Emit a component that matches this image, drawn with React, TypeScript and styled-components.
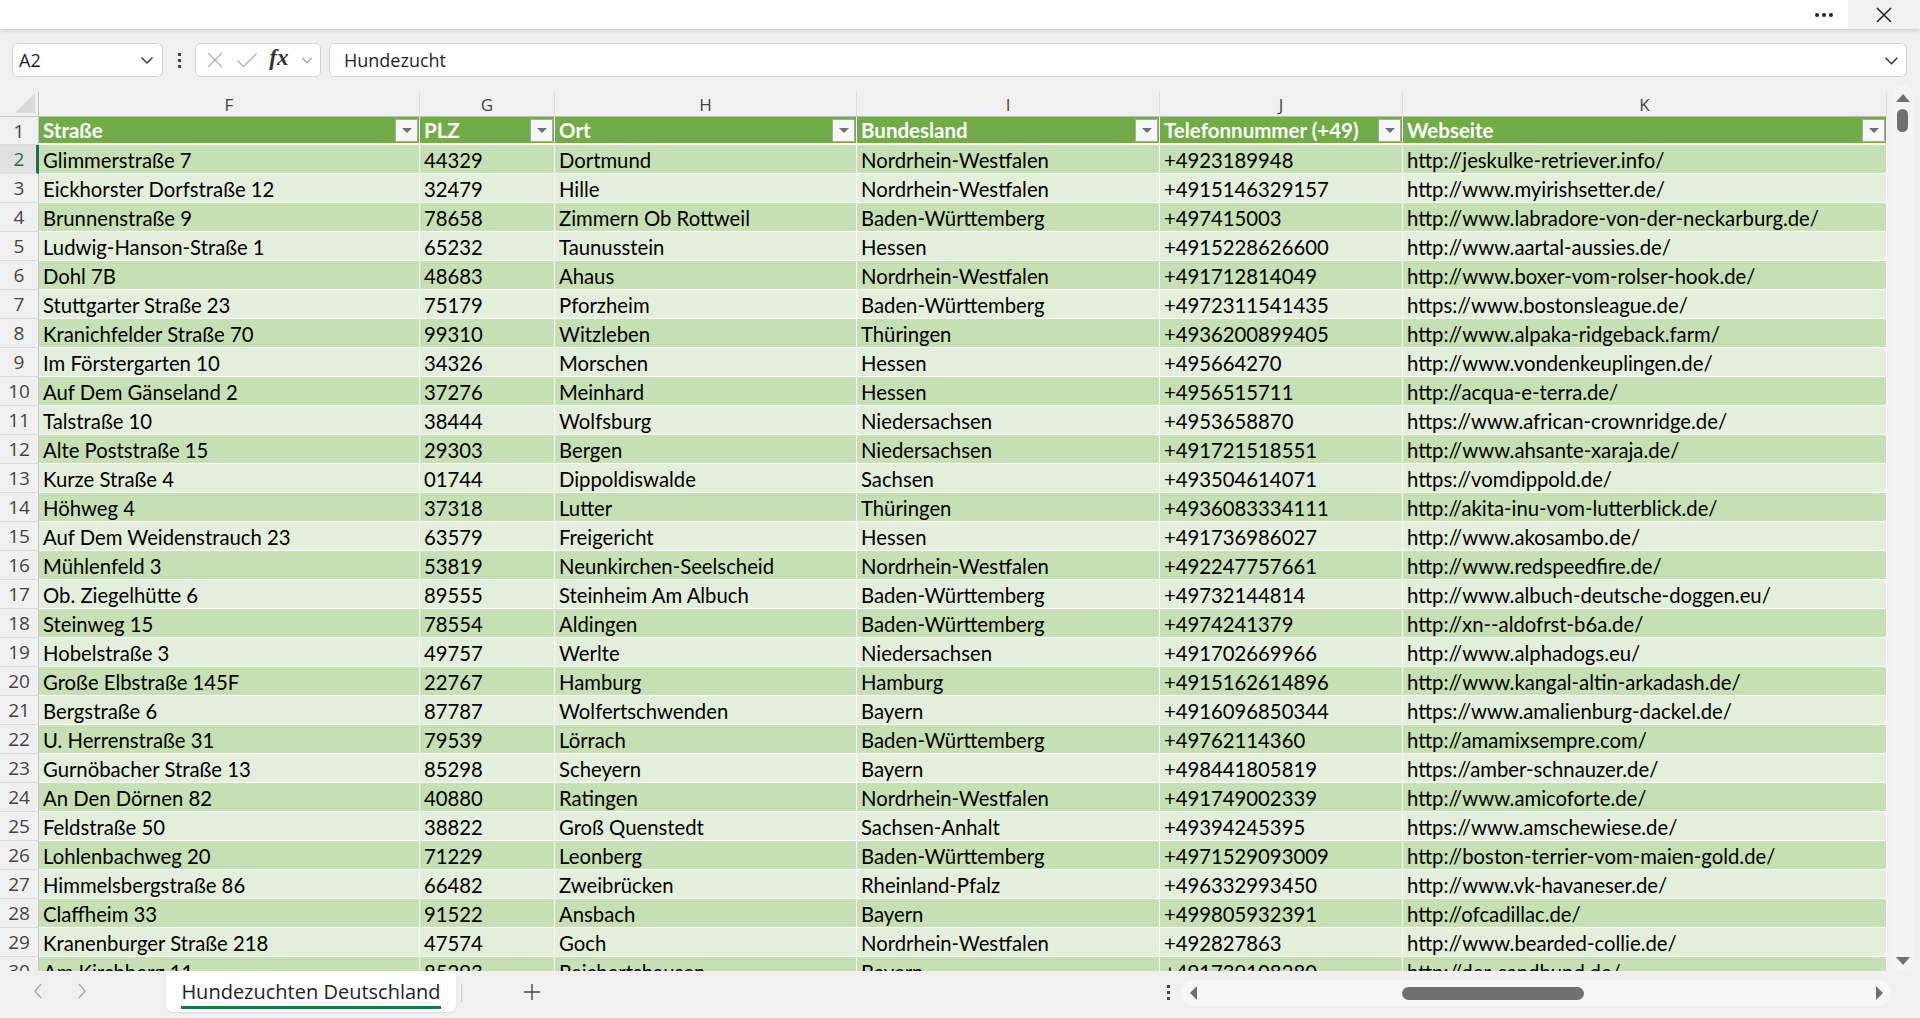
import styled, { createGlobalStyle } from "styled-components";

const GlobalStyle = createGlobalStyle`
  html, body {
    margin: 0;
    padding: 0;
    background: #f0f0f0;
    overflow: hidden;
  }
  * {
    box-sizing: border-box;
  }
`;

type Row = [string, string, string, string, string, string];

const rows: Row[] = [
  ["Glimmerstraße 7", "44329", "Dortmund", "Nordrhein-Westfalen", "+4923189948", "http://jeskulke-retriever.info/"],
  ["Eickhorster Dorfstraße 12", "32479", "Hille", "Nordrhein-Westfalen", "+4915146329157", "http://www.myirishsetter.de/"],
  ["Brunnenstraße 9", "78658", "Zimmern Ob Rottweil", "Baden-Württemberg", "+497415003", "http://www.labradore-von-der-neckarburg.de/"],
  ["Ludwig-Hanson-Straße 1", "65232", "Taunusstein", "Hessen", "+4915228626600", "http://www.aartal-aussies.de/"],
  ["Dohl 7B", "48683", "Ahaus", "Nordrhein-Westfalen", "+491712814049", "http://www.boxer-vom-rolser-hook.de/"],
  ["Stuttgarter Straße 23", "75179", "Pforzheim", "Baden-Württemberg", "+4972311541435", "https://www.bostonsleague.de/"],
  ["Kranichfelder Straße 70", "99310", "Witzleben", "Thüringen", "+4936200899405", "http://www.alpaka-ridgeback.farm/"],
  ["Im Förstergarten 10", "34326", "Morschen", "Hessen", "+495664270", "http://www.vondenkeuplingen.de/"],
  ["Auf Dem Gänseland 2", "37276", "Meinhard", "Hessen", "+4956515711", "http://acqua-e-terra.de/"],
  ["Talstraße 10", "38444", "Wolfsburg", "Niedersachsen", "+4953658870", "https://www.african-crownridge.de/"],
  ["Alte Poststraße 15", "29303", "Bergen", "Niedersachsen", "+491721518551", "http://www.ahsante-xaraja.de/"],
  ["Kurze Straße 4", "01744", "Dippoldiswalde", "Sachsen", "+493504614071", "https://vomdippold.de/"],
  ["Höhweg 4", "37318", "Lutter", "Thüringen", "+4936083334111", "http://akita-inu-vom-lutterblick.de/"],
  ["Auf Dem Weidenstrauch 23", "63579", "Freigericht", "Hessen", "+491736986027", "http://www.akosambo.de/"],
  ["Mühlenfeld 3", "53819", "Neunkirchen-Seelscheid", "Nordrhein-Westfalen", "+492247757661", "http://www.redspeedfire.de/"],
  ["Ob. Ziegelhütte 6", "89555", "Steinheim Am Albuch", "Baden-Württemberg", "+49732144814", "http://www.albuch-deutsche-doggen.eu/"],
  ["Steinweg 15", "78554", "Aldingen", "Baden-Württemberg", "+4974241379", "http://xn--aldofrst-b6a.de/"],
  ["Hobelstraße 3", "49757", "Werlte", "Niedersachsen", "+491702669966", "http://www.alphadogs.eu/"],
  ["Große Elbstraße 145F", "22767", "Hamburg", "Hamburg", "+4915162614896", "http://www.kangal-altin-arkadash.de/"],
  ["Bergstraße 6", "87787", "Wolfertschwenden", "Bayern", "+4916096850344", "https://www.amalienburg-dackel.de/"],
  ["U. Herrenstraße 31", "79539", "Lörrach", "Baden-Württemberg", "+49762114360", "http://amamixsempre.com/"],
  ["Gurnöbacher Straße 13", "85298", "Scheyern", "Bayern", "+498441805819", "https://amber-schnauzer.de/"],
  ["An Den Dörnen 82", "40880", "Ratingen", "Nordrhein-Westfalen", "+491749002339", "http://www.amicoforte.de/"],
  ["Feldstraße 50", "38822", "Groß Quenstedt", "Sachsen-Anhalt", "+49394245395", "https://www.amschewiese.de/"],
  ["Lohlenbachweg 20", "71229", "Leonberg", "Baden-Württemberg", "+4971529093009", "http://boston-terrier-vom-maien-gold.de/"],
  ["Himmelsbergstraße 86", "66482", "Zweibrücken", "Rheinland-Pfalz", "+496332993450", "http://www.vk-havaneser.de/"],
  ["Claffheim 33", "91522", "Ansbach", "Bayern", "+499805932391", "http://ofcadillac.de/"],
  ["Kranenburger Straße 218", "47574", "Goch", "Nordrhein-Westfalen", "+492827863", "http://www.bearded-collie.de/"],
  ["Am Kirchberg 11", "85293", "Reichertshausen", "Bayern", "+491739108280", "http://der-sandhund.de/"],
];

const columns = [
  { letter: "F", title: "Straße" },
  { letter: "G", title: "PLZ" },
  { letter: "H", title: "Ort" },
  { letter: "I", title: "Bundesland" },
  { letter: "J", title: "Telefonnummer (+49)" },
  { letter: "K", title: "Webseite" },
];

const uiFont = `"Open Sans", "Noto Sans", Arial, sans-serif`;
const cellFont = `Lato, "Liberation Sans", Arial, sans-serif`;

const Page = styled.div`
  height: 1018px;
  display: flex;
  flex-direction: column;
  font-family: ${uiFont};
`;

/* ---------- title bar ---------- */

const TitleBar = styled.div`
  height: 29px;
  display: flex;
  justify-content: flex-end;
  background: #fff;
  box-shadow: 0 1px 4px rgba(0, 0, 0, 0.18);
  position: relative;
  z-index: 2;
`;

const MoreButton = styled.div`
  width: 48px;
  display: flex;
  align-items: center;
  justify-content: center;
  gap: 3px;
  span {
    width: 4px;
    height: 4px;
    border-radius: 50%;
    background: #222;
  }
`;

const CloseButton = styled.div`
  width: 72px;
  display: flex;
  align-items: center;
  justify-content: center;
  background: #f0f0f0;
`;

/* ---------- formula bar ---------- */

const FormulaRow = styled.div`
  height: 34px;
  margin-top: 14px;
  padding-left: 12px;
  display: flex;
  align-items: stretch;
`;

const Field = styled.div<{ $width?: number }>`
  ${(p) => (p.$width ? `width: ${p.$width}px;` : "flex: 1;")}
  background: #fff;
  border: 1px solid #d4d4d4;
  border-radius: 6px;
  display: flex;
  align-items: center;
`;

const NameText = styled.span`
  flex: 1;
  padding-left: 6px;
  font-size: 18px;
  color: #1f1f1f;
`;

const Kebab = styled.div`
  width: 32px;
  display: flex;
  flex-direction: column;
  align-items: center;
  justify-content: center;
  gap: 3px;
  span {
    width: 3px;
    height: 3px;
    background: #444;
  }
`;

const FnGroup = styled(Field)`
  margin-right: 8px;
  padding: 0 6px 0 10px;
  gap: 0;
  justify-content: space-between;
`;

const FxLabel = styled.span`
  font-family: "Liberation Serif", "DejaVu Serif", serif;
  font-style: italic;
  font-weight: 700;
  font-size: 23px;
  color: #333;
  margin-top: -4px;
`;

const FormulaText = styled.span`
  flex: 1;
  padding-left: 14px;
  font-size: 18px;
  color: #1f1f1f;
`;

const Chevron = ({ color = "#333", size = 16 }: { color?: string; size?: number }) => (
  <svg width={size} height={size} viewBox="0 0 16 16" fill="none">
    <path d="M2.5 5.5 L8 11 L13.5 5.5" stroke={color} strokeWidth="1.4" />
  </svg>
);

/* ---------- sheet grid ---------- */

const SheetArea = styled.div`
  height: 879px;
  margin-top: 15px;
  display: flex;
`;

const Viewport = styled.div`
  width: 1887px;
  overflow: hidden;
`;

const Grid = styled.div`
  display: grid;
  grid-template-columns: 39px 381px 135px 302px 303px 243px 484px;
  grid-template-rows: 25px 28px repeat(29, 29px);
`;

const Corner = styled.div`
  background: #f0f0f0;
  border-right: 1px solid #c6c6c6;
  border-bottom: 1px solid #c6c6c6;
  position: relative;
  &::after {
    content: "";
    position: absolute;
    right: 3px;
    bottom: 3px;
    border-left: 20px solid transparent;
    border-bottom: 20px solid #dadada;
  }
`;

const ColLetter = styled.div`
  background: #f0f0f0;
  border-right: 1px solid #dddddd;
  border-bottom: 1px solid #bdbdbd;
  display: flex;
  align-items: center;
  justify-content: center;
  font-size: 17px;
  color: #444;
`;

const RowNumber = styled.div<{ $active?: boolean }>`
  background: ${(p) => (p.$active ? "#e1e1e1" : "#f0f0f0")};
  border-bottom: 1px solid #dddddd;
  border-right: ${(p) => (p.$active ? "3px solid #1e7145" : "1px solid #c6c6c6")};
  display: flex;
  align-items: center;
  justify-content: center;
  padding-left: ${(p) => (p.$active ? "2px" : "0")};
  font-size: 19px;
  color: ${(p) => (p.$active ? "#1e7145" : "#444")};
`;

const HeadCell = styled.div`
  background: #70ad47;
  border-right: 1px solid #fff;
  border-bottom: 2px solid #fff;
  display: flex;
  align-items: center;
  justify-content: space-between;
  padding: 0 1px 0 4px;
  font-family: ${cellFont};
  font-weight: 700;
  font-size: 20.5px;
  color: #fff;
  white-space: nowrap;
  overflow: hidden;
`;

const FilterButton = styled.div`
  width: 23px;
  height: 23px;
  background: #f7f7f7;
  border: 1px solid #a9a9a9;
  display: flex;
  align-items: center;
  justify-content: center;
  flex-shrink: 0;
  &::after {
    content: "";
    border-left: 5px solid transparent;
    border-right: 5px solid transparent;
    border-top: 5px solid #707070;
    margin-top: 1px;
  }
`;

const Cell = styled.div<{ $dark: boolean }>`
  background: ${(p) => (p.$dark ? "#c6e0b4" : "#e2efda")};
  border-right: 1px solid #fff;
  border-bottom: 1px solid #fff;
  display: flex;
  align-items: center;
  padding: 2px 0 0 4px;
  font-family: ${cellFont};
  font-size: 20.3px;
  color: #000;
  white-space: nowrap;
  overflow: hidden;
`;

const VScroll = styled.div`
  width: 21px;
  margin: -7px 0 -2px 5px;
  background: #f4f4f4;
  border-radius: 11px;
  display: flex;
  flex-direction: column;
  align-items: center;
  padding: 9px 0 8px;
`;

const ArrowUp = styled.div`
  border-left: 7px solid transparent;
  border-right: 7px solid transparent;
  border-bottom: 8px solid #707070;
`;

const ArrowDown = styled.div`
  margin-top: auto;
  border-left: 7px solid transparent;
  border-right: 7px solid transparent;
  border-top: 8px solid #707070;
`;

const VThumb = styled.div`
  width: 11px;
  height: 23px;
  margin-top: 7px;
  border-radius: 6px;
  background: #707070;
`;

/* ---------- sheet tabs & horizontal scroll ---------- */

const BottomBar = styled.div`
  flex: 1;
  display: flex;
  align-items: flex-start;
  background: #f0f0f0;
  position: relative;
  z-index: 1;
`;

const NavButtons = styled.div`
  width: 166px;
  height: 40px;
  display: flex;
  align-items: center;
  padding-left: 32px;
  gap: 32px;
`;

const SheetTab = styled.div`
  width: 290px;
  height: 41px;
  padding-top: 5px;
  background: #fff;
  border-radius: 0 0 7px 7px;
  box-shadow: 0 1px 2px rgba(0, 0, 0, 0.08);
  display: flex;
  flex-direction: column;
  align-items: center;
  justify-content: center;
  font-size: 20px;
  color: #222;
`;

const TabLabel = styled.span`
  padding-bottom: 1px;
  border-bottom: 3px solid #107c41;
  line-height: 26px;
`;

const TabDivider = styled.div`
  width: 1px;
  height: 18px;
  margin: 13px 0 0 5px;
  background: #cfcfcf;
`;

const AddSheet = styled.div`
  width: 140px;
  height: 42px;
  display: flex;
  align-items: center;
  justify-content: center;
`;

const BarSpacer = styled.div`
  flex: 1;
`;

const HKebab = styled(Kebab)`
  width: 26px;
  height: 42px;
  margin-top: 0;
`;

const HScroll = styled.div`
  width: 710px;
  height: 26px;
  margin: 9px 29px 0 0;
  background: #f6f6f6;
  border-radius: 13px;
  display: flex;
  align-items: center;
  padding: 0 8px 0 9px;
`;

const ArrowLeft = styled.div`
  border-top: 7px solid transparent;
  border-bottom: 7px solid transparent;
  border-right: 7px solid #707070;
`;

const ArrowRight = styled.div`
  margin-left: auto;
  border-top: 7px solid transparent;
  border-bottom: 7px solid transparent;
  border-left: 7px solid #707070;
`;

const HThumb = styled.div`
  width: 182px;
  height: 13px;
  margin-left: 205px;
  border-radius: 7px;
  background: #707070;
`;

export default function App() {
  return (
    <Page>
      <GlobalStyle />
      <TitleBar>
        <MoreButton>
          <span />
          <span />
          <span />
        </MoreButton>
        <CloseButton>
          <svg width="18" height="18" viewBox="0 0 18 18">
            <path d="M2 2 L16 16 M16 2 L2 16" stroke="#222" strokeWidth="1.5" />
          </svg>
        </CloseButton>
      </TitleBar>

      <FormulaRow>
        <Field $width={151}>
          <NameText>A2</NameText>
          <span style={{ marginRight: 7, display: "flex" }}>
            <Chevron />
          </span>
        </Field>
        <Kebab>
          <span />
          <span />
          <span />
        </Kebab>
        <FnGroup $width={126}>
          <svg width="18" height="18" viewBox="0 0 18 18">
            <path d="M2 2 L16 16 M16 2 L2 16" stroke="#b4b4b4" strokeWidth="1.4" />
          </svg>
          <svg width="22" height="18" viewBox="0 0 22 18">
            <path d="M1.5 9.5 L7.5 15.5 L20.5 2.5" stroke="#b4b4b4" strokeWidth="1.4" fill="none" />
          </svg>
          <FxLabel>fx</FxLabel>
          <Chevron color="#9a9a9a" size={14} />
        </FnGroup>
        <Field style={{ marginRight: 13 }}>
          <FormulaText>Hundezucht</FormulaText>
          <span style={{ marginRight: 6, display: "flex" }}>
            <Chevron size={17} />
          </span>
        </Field>
      </FormulaRow>

      <SheetArea>
        <Viewport>
          <Grid>
            <Corner />
            {columns.map((c) => (
              <ColLetter key={c.letter}>{c.letter}</ColLetter>
            ))}
            <RowNumber>1</RowNumber>
            {columns.map((c) => (
              <HeadCell key={c.title}>
                <span>{c.title}</span>
                <FilterButton />
              </HeadCell>
            ))}
            {rows.map((r, i) => {
              const n = i + 2;
              const dark = n % 2 === 0;
              return [
                <RowNumber key={`n${n}`} $active={n === 2}>
                  {n}
                </RowNumber>,
                ...r.map((v, j) => (
                  <Cell key={`${n}-${j}`} $dark={dark}>
                    {v}
                  </Cell>
                )),
              ];
            })}
          </Grid>
        </Viewport>
        <VScroll>
          <ArrowUp />
          <VThumb />
          <ArrowDown />
        </VScroll>
      </SheetArea>

      <BottomBar>
        <NavButtons>
          <svg width="12" height="18" viewBox="0 0 12 18">
            <path d="M9 2 L3 9 L9 16" stroke="#a8a8a8" strokeWidth="1.4" fill="none" />
          </svg>
          <svg width="12" height="18" viewBox="0 0 12 18">
            <path d="M3 2 L9 9 L3 16" stroke="#a8a8a8" strokeWidth="1.4" fill="none" />
          </svg>
        </NavButtons>
        <SheetTab>
          <TabLabel>Hundezuchten Deutschland</TabLabel>
        </SheetTab>
        <TabDivider />
        <AddSheet>
          <svg width="18" height="18" viewBox="0 0 18 18">
            <path d="M9 1 V17 M1 9 H17" stroke="#444" strokeWidth="1.4" />
          </svg>
        </AddSheet>
        <BarSpacer />
        <HKebab>
          <span />
          <span />
          <span />
        </HKebab>
        <HScroll>
          <ArrowLeft />
          <HThumb />
          <ArrowRight />
        </HScroll>
      </BottomBar>
    </Page>
  );
}
